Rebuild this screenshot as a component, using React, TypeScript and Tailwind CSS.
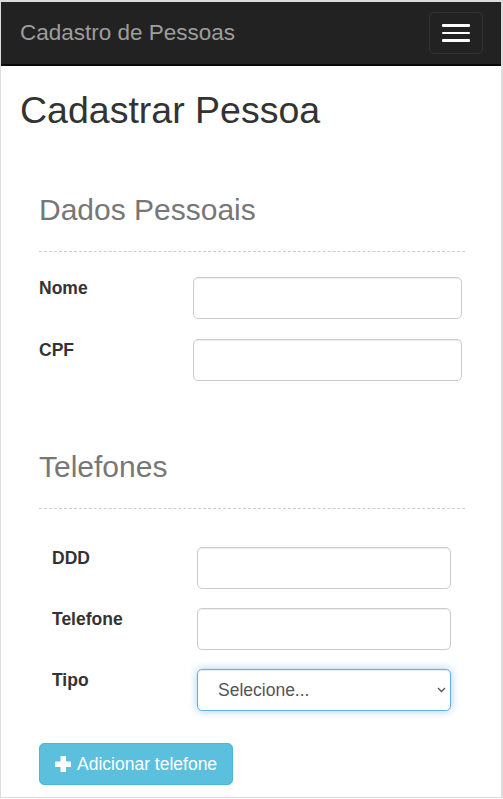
import { useState } from 'react';

// linha de formulário: rótulo à esquerda, campo à direita
function Campo({ label, largura, rotulo }: { label: string; largura: string; rotulo: string }) {
    return (
        <div className="flex items-start">
            <label className={`${rotulo} shrink-0 text-[17.5px] leading-[25px] font-bold text-[#333]`}>{label}</label>
            <input
                type="text"
                className={`${largura} mt-px h-[42px] rounded-[5px] border border-[#ccc] bg-white px-[15px] text-[17.5px] text-[#555] shadow-[inset_0_1px_1px_rgba(0,0,0,0.075)] outline-none`}
            />
        </div>
    );
}

function Plus() {
    return (
        <svg width="16" height="16" viewBox="0 0 16 16" className="shrink-0">
            <rect x="5.5" y="0" width="5.5" height="16" fill="#fff" />
            <rect x="0" y="5.5" width="16" height="5.5" fill="#fff" />
        </svg>
    );
}

export default function App() {
    const [tipo, setTipo] = useState('');

    return (
        <div className="h-[799px] w-[503px] overflow-hidden bg-white" style={{ fontFamily: '"Liberation Sans", Arial, sans-serif' }}>
            <div className="h-[798px] border-t-2 border-r-2 border-b border-l border-[#dcdcdc]">
                {/* --- NAVBAR --- */}
                <nav className="flex h-[64px] items-center justify-between border-b-2 border-[#080808] bg-[#222] pr-[18px] pl-[19px]">
                    <span className="text-[22.5px] text-[#9d9d9d]">Cadastro de Pessoas</span>
                    <button className="flex h-[42px] w-[54px] flex-col items-center justify-center gap-[5px] rounded-[5px] border border-[#333]">
                        <span className="h-[2.5px] w-[28px] rounded-[1px] bg-white"></span>
                        <span className="h-[2.5px] w-[28px] rounded-[1px] bg-white"></span>
                        <span className="h-[2.5px] w-[28px] rounded-[1px] bg-white"></span>
                    </button>
                </nav>

                <main className="px-[19px]">
                    <h1 className="mt-[24px] text-[37.5px] leading-[1.1] font-normal text-[#333]">Cadastrar Pessoa</h1>

                    <div className="pr-[17px] pl-[19px]">
                        {/* --- DADOS PESSOAIS --- */}
                        <h3 className="mt-[62px] text-[30px] leading-[1.1] text-[#777]">Dados Pessoais</h3>
                        <div className="mt-[25px] border-t border-dashed border-[#ccc]"></div>
                        <div className="mt-[24px] flex flex-col gap-[19px]">
                            <Campo label="Nome" rotulo="w-[154px]" largura="w-[269px]" />
                            <Campo label="CPF" rotulo="w-[154px]" largura="w-[269px]" />
                        </div>

                        {/* --- TELEFONES --- */}
                        <h3 className="mt-[69px] text-[30px] leading-[1.1] text-[#777]">Telefones</h3>
                        <div className="mt-[25px] border-t border-dashed border-[#ccc]"></div>
                        <div className="mt-[37px] flex flex-col gap-[18px] pl-[13px]">
                            <Campo label="DDD" rotulo="w-[145px]" largura="w-[254px]" />
                            <Campo label="Telefone" rotulo="w-[145px]" largura="w-[254px]" />
                            <div className="flex items-start">
                                <label className="w-[145px] shrink-0 text-[17.5px] leading-[25px] font-bold text-[#333]">Tipo</label>
                                <div className="relative mt-px w-[254px]">
                                    <select
                                        value={tipo}
                                        onChange={(e) => setTipo(e.target.value)}
                                        className="h-[42px] w-full appearance-none rounded-[5px] border border-[#66afe9] bg-white pl-[20px] text-[17.5px] text-[#555] shadow-[inset_0_1px_1px_rgba(0,0,0,0.075),0_0_8px_rgba(102,175,233,0.6)] outline-none"
                                    >
                                        <option value="">Selecione...</option>
                                        <option value="cel">Celular</option>
                                        <option value="res">Residencial</option>
                                        <option value="com">Comercial</option>
                                    </select>
                                    <svg width="9" height="6" viewBox="0 0 9 6" className="pointer-events-none absolute top-[18px] right-[5px]">
                                        <path d="M1 1l3.5 3.5L8 1" fill="none" stroke="#555" strokeWidth="1.3" />
                                    </svg>
                                </div>
                            </div>
                        </div>

                        <button className="mt-[32px] flex h-[42px] w-[194px] items-center gap-[6px] rounded-[5px] border border-[#46b8da] bg-[#5bc0de] pl-[15px] text-[17.5px] text-white">
                            <Plus />
                            Adicionar telefone
                        </button>
                    </div>
                </main>
            </div>
        </div>
    );
}
